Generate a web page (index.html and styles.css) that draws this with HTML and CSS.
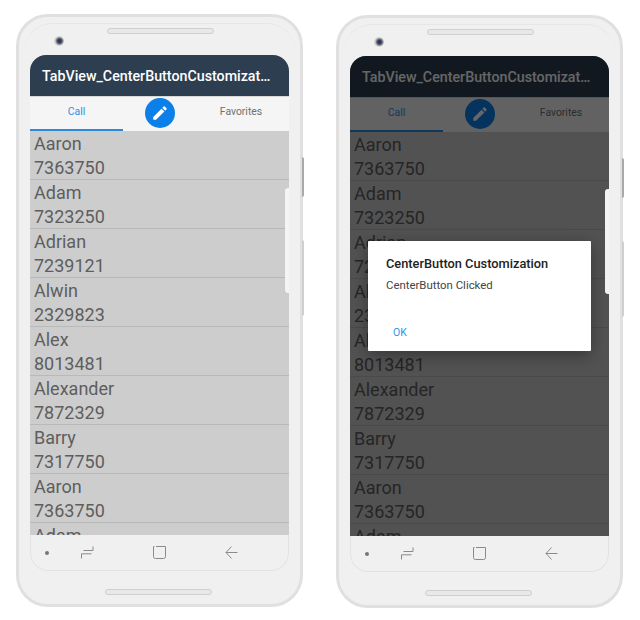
FILE: index.html
```html
<!DOCTYPE html>
<html lang="en">
<head>
    <meta charset="UTF-8">
    <meta name="viewport" content="width=device-width, initial-scale=1.0">
    <title>TabView Center Button</title>
    <link rel="stylesheet" href="styles.css">
</head>
<body>
    <svg class="icon-defs" width="0" height="0">
        <symbol id="icon-edit" viewBox="0 0 24 24">
            <path d="M3 17.25V21h3.75L17.81 9.94l-3.75-3.75L3 17.25zM20.71 7.04c.39-.39.39-1.02 0-1.41l-2.34-2.34c-.39-.39-1.02-.39-1.41 0l-1.83 1.83 3.75 3.75 1.83-1.83z"/>
        </symbol>
        <symbol id="icon-recents" viewBox="0 0 13 13">
            <path d="M12 .5V4.500H2.500M.5 12.500V7.800H10.500"/>
        </symbol>
        <symbol id="icon-home" viewBox="0 0 13 13">
            <path d="M3 .5H12.500V10.500A2 2 0 0 1 10.500 12.500H2.500A2 2 0 0 1 .5 10.500V.5H1.500M12.500 4V6M5 12.500H7"/>
        </symbol>
        <symbol id="icon-back" viewBox="0 0 13 13">
            <path d="M12.500 6.500H1M6.500.5L1 6.500L6.500 12.500"/>
        </symbol>
    </svg>

    <div class="phone">
        <div class="bezel-top">
            <span class="camera"></span>
            <span class="speaker"></span>
        </div>
        <div class="screen">
            <div class="app">
                <div class="app-header">TabView_CenterButtonCustomizat…</div>
                <div class="tabs">
                    <div class="tab tab-active">Call</div>
                    <div class="tab-center">
                        <button class="fab"><svg><use href="#icon-edit"/></svg></button>
                    </div>
                    <div class="tab tab-last">Favorites</div>
                </div>
                <div class="contacts">
                    <div class="contact"><div>Aaron</div><div>7363750</div></div>
                    <div class="contact"><div>Adam</div><div>7323250</div></div>
                    <div class="contact"><div>Adrian</div><div>7239121</div></div>
                    <div class="contact"><div>Alwin</div><div>2329823</div></div>
                    <div class="contact"><div>Alex</div><div>8013481</div></div>
                    <div class="contact"><div>Alexander</div><div>7872329</div></div>
                    <div class="contact"><div>Barry</div><div>7317750</div></div>
                    <div class="contact"><div>Aaron</div><div>7363750</div></div>
                    <div class="contact"><div>Adam</div><div>7323250</div></div>
                </div>
                <span class="edge-handle"></span>
            </div>
            <div class="nav-bar">
                <span class="nav-dot"></span>
                <svg class="nav-icon"><use href="#icon-recents"/></svg>
                <svg class="nav-icon"><use href="#icon-home"/></svg>
                <svg class="nav-icon"><use href="#icon-back"/></svg>
            </div>
        </div>
        <div class="bezel-bottom"><span class="speaker"></span></div>
        <span class="side-btn side-btn-power"></span>
        <span class="side-btn side-btn-volume"></span>
    </div>

    <div class="phone phone-dialog">
        <div class="bezel-top">
            <span class="camera"></span>
            <span class="speaker"></span>
        </div>
        <div class="screen">
            <div class="app">
                <div class="app-header">TabView_CenterButtonCustomizat…</div>
                <div class="tabs">
                    <div class="tab tab-active">Call</div>
                    <div class="tab-center">
                        <button class="fab"><svg><use href="#icon-edit"/></svg></button>
                    </div>
                    <div class="tab tab-last">Favorites</div>
                </div>
                <div class="contacts">
                    <div class="contact"><div>Aaron</div><div>7363750</div></div>
                    <div class="contact"><div>Adam</div><div>7323250</div></div>
                    <div class="contact"><div>Adrian</div><div>7239121</div></div>
                    <div class="contact"><div>Alwin</div><div>2329823</div></div>
                    <div class="contact"><div>Alex</div><div>8013481</div></div>
                    <div class="contact"><div>Alexander</div><div>7872329</div></div>
                    <div class="contact"><div>Barry</div><div>7317750</div></div>
                    <div class="contact"><div>Aaron</div><div>7363750</div></div>
                    <div class="contact"><div>Adam</div><div>7323250</div></div>
                </div>
                <div class="scrim"></div>
                <span class="edge-handle"></span>
                <div class="dialog">
                    <div class="dialog-title">CenterButton Customization</div>
                    <div class="dialog-text">CenterButton Clicked</div>
                    <div class="dialog-ok">OK</div>
                </div>
            </div>
            <div class="nav-bar">
                <span class="nav-dot"></span>
                <svg class="nav-icon"><use href="#icon-recents"/></svg>
                <svg class="nav-icon"><use href="#icon-home"/></svg>
                <svg class="nav-icon"><use href="#icon-back"/></svg>
            </div>
        </div>
        <div class="bezel-bottom"><span class="speaker"></span></div>
        <span class="side-btn side-btn-power"></span>
        <span class="side-btn side-btn-volume"></span>
    </div>
</body>
</html>
```

FILE: styles.css
```css
html {
    background: #fff;
}
body {
    font-family: Roboto, "Liberation Sans", sans-serif;
    margin: 0;
    padding: 14px 16px 0;
    display: flex;
    align-items: flex-start;
    gap: 33px;
}
.icon-defs {
    position: absolute;
}

/* phone shell */
.phone {
    position: relative;
    box-sizing: border-box;
    width: 287px;
    height: 593px;
    padding: 0 11px;
    background: #f0f0f0;
    border: 3px solid #e0e0e0;
    border-radius: 32px;
    display: flex;
    flex-direction: column;
}
.phone::before {
    content: "";
    position: absolute;
    top: 6px;
    left: 5px;
    right: 5px;
    height: 40px;
    border-top: 1px solid #e6e6e6;
    border-radius: 28px 28px 0 0;
}
.phone-dialog {
    margin-top: 1px;
}
.bezel-top {
    height: 38px;
    display: flex;
    align-items: flex-start;
}
.camera {
    width: 10px;
    height: 10px;
    margin: 19px 0 0 24px;
    border-radius: 50%;
    background: radial-gradient(circle at 55% 50%, #2a3468 0 1.5px, #767676 3px, #d4d4d4 4.500px);
}
.speaker {
    box-sizing: border-box;
    display: block;
    width: 107px;
    height: 6px;
    background: #e8e8e8;
    border: 1px solid #cfcfcf;
    border-radius: 3px;
}
.bezel-top .speaker {
    margin: 11px 0 0 43px;
}
.bezel-bottom {
    flex: 1;
    padding: 18px 0 0 75px;
}
.side-btn {
    position: absolute;
    left: 283px;
    width: 2px;
    border-radius: 0 2px 2px 0;
}
.side-btn-power {
    top: 140px;
    height: 40px;
    background: #a9a9a9;
}
.side-btn-volume {
    top: 223px;
    height: 76px;
    background: #cfcfcf;
}

/* screen */
.screen {
    height: 516px;
    display: flex;
    flex-direction: column;
    border-radius: 16px 16px 18px 18px;
    overflow: hidden;
}
.app {
    position: relative;
    height: 480px;
    display: flex;
    flex-direction: column;
    overflow: hidden;
}
.app-header {
    height: 41px;
    padding: 0 0 0 12px;
    flex-shrink: 0;
    background: #2c3e50;
    color: #fff;
    font-size: 14.25px;
    font-weight: 500;
    line-height: 43px;
    white-space: nowrap;
}
.tabs {
    display: grid;
    grid-template-columns: 93px 74px 1fr;
    height: 35px;
    flex-shrink: 0;
    box-sizing: border-box;
    background: #f5f5f5;
    border-top: 1px solid #d8d8d8;
}
.tab {
    box-sizing: border-box;
    height: 34px;
    font-size: 10.400px;
    line-height: 30px;
    text-align: center;
    color: #707070;
}
.tab-active {
    color: #2f8fe6;
    border-bottom: 2px solid #2b8ae0;
}
.tab-last {
    padding-right: 4px;
}
.tab-center {
    display: flex;
    justify-content: center;
    padding-top: 1px;
}
.fab {
    width: 30px;
    height: 30px;
    padding: 6px;
    border: 0;
    border-radius: 50%;
    background: #0a80e8;
    fill: #fff;
}
.fab svg {
    display: block;
    width: 18px;
    height: 18px;
}

/* list */
.contacts {
    flex: 1;
    min-height: 0;
    overflow: hidden;
    background: #cdcdcd;
    color: #5e5e5e;
    font-size: 18px;
    line-height: 24px;
}
.contact {
    box-sizing: border-box;
    height: 49px;
    padding: 1px 0 0 4px;
    border-bottom: 1px solid #b9b9b9;
}
.edge-handle {
    position: absolute;
    top: 133px;
    right: 0;
    width: 4px;
    height: 105px;
    background: #f4f4f4;
    border-radius: 3px 0 0 3px;
}

/* dialog */
.scrim {
    position: absolute;
    top: 0;
    right: 0;
    bottom: 0;
    left: 0;
    background: rgba(0, 0, 0, 0.6);
}
.dialog {
    position: absolute;
    top: 185px;
    left: 18px;
    box-sizing: border-box;
    width: 223px;
    height: 110px;
    padding: 15px 18px;
    background: #fff;
    border-radius: 1px;
    box-shadow: 0 4px 16px rgba(0, 0, 0, 0.35);
}
.dialog-title {
    font-size: 12.800px;
    font-weight: 500;
    line-height: 16px;
    color: #222;
}
.dialog-text {
    margin-top: 6px;
    font-size: 11.400px;
    line-height: 15px;
    color: #444;
}
.dialog-ok {
    margin-top: 33px;
    padding-left: 7px;
    font-size: 10.500px;
    line-height: 14px;
    color: #2f95e6;
}

/* nav bar */
.nav-bar {
    flex: 1;
    display: grid;
    grid-template-columns: 31px 50px 94px 50px;
    justify-items: center;
    align-items: center;
    box-sizing: border-box;
    background: #f0f0f0;
    border: solid #e2e2e2;
    border-width: 0 1px 1px;
    border-radius: 0 0 18px 18px;
}
.nav-dot {
    width: 4px;
    height: 4px;
    border-radius: 50%;
    background: #777;
}
.nav-icon {
    width: 13px;
    height: 13px;
    fill: none;
    stroke: #8a8a8a;
    stroke-width: 1;
}
```
